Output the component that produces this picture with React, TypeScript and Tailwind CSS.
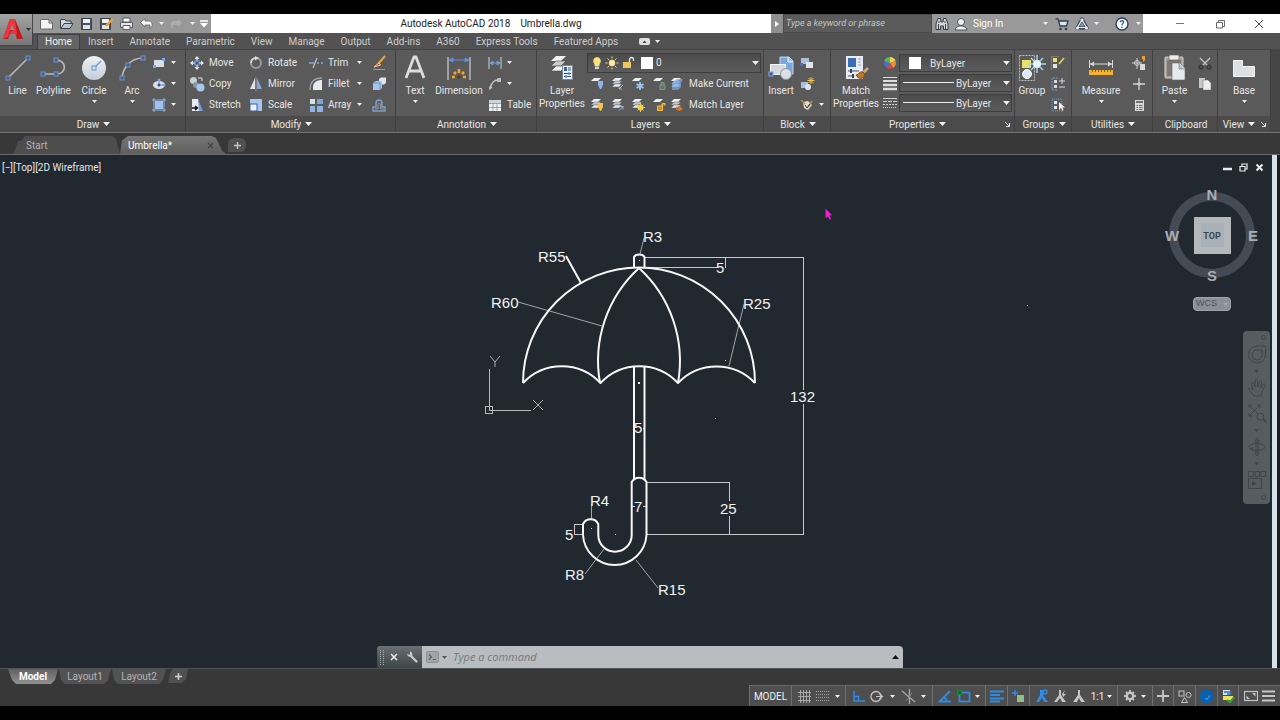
import type { ReactNode } from "react";

interface SvgProps {
  w: number;
  h: number;
  label?: string;
  children: ReactNode;
}

function Svg({ w, h, label, children }: SvgProps) {
  return (
    <svg
      width={w}
      height={h}
      viewBox={`0 0 ${String(w)} ${String(h)}`}
      fill="none"
      className="shrink-0"
      role={label ? "img" : undefined}
      aria-label={label}
      aria-hidden={label ? undefined : true}
    >
      {children}
    </svg>
  );
}

function Caret({ small = false, color = "#f0f0f0" }: { small?: boolean; color?: string }) {
  return small ? (
    <Svg w={5} h={3}>
      <path d="M0 0H5L2.5 3Z" fill={color} />
    </Svg>
  ) : (
    <Svg w={7} h={4}>
      <path d="M0 0H7L3.5 4Z" fill={color} />
    </Svg>
  );
}

/* ---------- large ribbon icons ---------- */

const LineIcon = () => (
  <Svg w={26} h={28}>
    <path d="M3 24L23 4" stroke="#b9b9b9" strokeWidth={1.6} />
    <rect x={1} y={22} width={4} height={4} fill="#4a5f85" stroke="#6d93d0" />
    <rect x={21} y={2} width={4} height={4} fill="#4a5f85" stroke="#6d93d0" />
  </Svg>
);

const PolylineIcon = () => (
  <Svg w={28} h={28}>
    <path d="M3 20H17C27 20 27 6 16 6" stroke="#b9b9b9" strokeWidth={1.6} />
    <rect x={1} y={18} width={4} height={4} fill="#4a5f85" stroke="#6d93d0" />
    <rect x={14} y={18} width={4} height={4} fill="#4a5f85" stroke="#6d93d0" />
    <rect x={14} y={4} width={4} height={4} fill="#4a5f85" stroke="#6d93d0" />
  </Svg>
);

const CircleIcon = () => (
  <Svg w={26} h={28}>
    <defs>
      <linearGradient id="disc" x1="0" y1="0" x2="0" y2="1">
        <stop offset="0" stopColor="#f0f2f4" />
        <stop offset="1" stopColor="#c3ccd6" />
      </linearGradient>
    </defs>
    <circle cx={13} cy={14} r={12} fill="url(#disc)" />
    <path d="M13 14L20 7" stroke="#5f97e0" strokeWidth={1.2} />
    <rect x={11} y={12} width={4} height={4} fill="#cfe0f5" stroke="#5f97e0" />
  </Svg>
);

const ArcIcon = () => (
  <Svg w={28} h={28}>
    <path d="M4 24C5 13 13 4 25 4" stroke="#b9b9b9" strokeWidth={1.6} />
    <rect x={2} y={22} width={4} height={4} fill="#4a5f85" stroke="#6d93d0" />
    <rect x={8} y={9} width={4} height={4} fill="#4a5f85" stroke="#6d93d0" />
    <rect x={23} y={2} width={4} height={4} fill="#4a5f85" stroke="#6d93d0" />
  </Svg>
);

const TextIcon = () => (
  <Svg w={24} h={28}>
    <path
      d="M3 24L11 3H13L21 24M6 17H18"
      stroke="#dcdcdc"
      strokeWidth={2.8}
      strokeLinejoin="round"
    />
  </Svg>
);

const DimensionIcon = () => (
  <Svg w={26} h={28}>
    <path d="M2 3V26M24 3V26" stroke="#a0a0a0" strokeWidth={2} />
    <path d="M3 6H23M3 6l4-2v4zM23 6l-4-2v4z" stroke="#5b8fe0" fill="#5b8fe0" />
    <path
      d="M13 15V19M8 18L10 20M18 18L16 20M6 23H9M17 23H20"
      stroke="#f0a72e"
      strokeWidth={2.6}
    />
    <circle cx={13} cy={23} r={1.5} fill="#5a3b10" />
  </Svg>
);

const LayerPropsIcon = () => (
  <Svg w={26} h={28}>
    <path d="M7 2H17L12 7H2Z" fill="#f2f2f2" />
    <path d="M7 7H17L12 12H2Z" fill="#c9ccd0" stroke="#4a4a4a" strokeWidth={0.6} />
    <path d="M7 12H17L12 17H2Z" fill="#eceff2" stroke="#4a4a4a" strokeWidth={0.6} />
    <rect x={13.5} y={11.5} width={10} height={14} fill="#eef2f8" stroke="#7c8796" />
    <rect x={15} y={13} width={3} height={4} fill="#2f62b0" />
    <path d="M19 14H22M19 16H22M15 19.5H22M15 22.5H22" stroke="#39527a" />
    <rect x={19} y={18.5} width={2} height={2} fill="#3c79d8" />
    <rect x={16} y={21.5} width={2} height={2} fill="#3c79d8" />
  </Svg>
);

const InsertIcon = () => (
  <Svg w={26} h={28}>
    <path d="M12 3H21L25 7V20H12Z" fill="#7ea6de" stroke="#bcd3f2" />
    <path d="M20 3V8H25" stroke="#e6effb" fill="#a9c5ee" />
    <rect x={2.5} y={10.5} width={15} height={10} fill="#d4d9df" stroke="#f4f4f4" />
    <circle cx={18} cy={20} r={5.5} fill="#dbe0e6" stroke="#8c939b" />
    <rect x={1} y={18} width={4} height={4} fill="#4a5f85" stroke="#7ea6e6" />
  </Svg>
);

const MatchPropsIcon = () => (
  <Svg w={26} h={28}>
    <rect x={3} y={2} width={17} height={23} fill="#e9edf2" />
    <rect x={5} y={4} width={8} height={9} fill="#3a6cb0" />
    <path d="M15 5H18M15 8H18M15 11H18" stroke="#8da2bf" />
    <path d="M5 17H16M5 22H11" stroke="#49566a" strokeWidth={1.2} />
    <path d="M8 15V19M10 20V24" stroke="#33445c" strokeWidth={2} />
    <path d="M25 14L20 19" stroke="#cba776" strokeWidth={3} />
    <path d="M13 21C16 21 16 17 20 18L22 21C20 26 15 25 13 21Z" fill="#c2772f" stroke="#7f4817" />
  </Svg>
);

const GroupIcon = () => (
  <Svg w={28} h={28}>
    <rect x={1.5} y={1.5} width={15} height={25} stroke="#bdbdbd" strokeDasharray="2 1" />
    <rect x={4} y={6} width={9} height={8} fill="#e9e26a" />
    <circle cx={9} cy={20} r={4.5} fill="#dcebf6" stroke="#fff" />
    <path d="M19 1V19M10 10H28M13 4L25 16M25 4L13 16" stroke="#a9d5f7" strokeWidth={1.4} />
    <circle cx={19} cy={10} r={4} fill="#e7f5ff" />
  </Svg>
);

const MeasureIcon = () => (
  <Svg w={26} h={28}>
    <path d="M1.5 6V14M24.5 6V14M2 10H24" stroke="#d8d8d8" />
    <path d="M2 10l4-2.5v5zM24 10l-4-2.5v5z" fill="#d8d8d8" />
    <rect x={1} y={16} width={24} height={5} fill="#f2b22e" />
    <path
      d="M4.5 16v2M7.5 16v2M10.5 16v2M13.5 16v2M16.5 16v2M19.5 16v2M22.5 16v2"
      stroke="#8a5d0c"
    />
  </Svg>
);

const PasteIcon = () => (
  <Svg w={26} h={28}>
    <rect x={3} y={3} width={18} height={21} rx={1} fill="#a8a29a" stroke="#d6d1ca" />
    <rect x={5} y={6} width={14} height={16} fill="#7d7871" />
    <rect x={7} y={1} width={10} height={5} rx={1} fill="#ececec" stroke="#555" strokeWidth={0.6} />
    <path d="M10 9H18L23 14V26H10Z" fill="#e6eaef" stroke="#666" strokeWidth={0.6} />
    <path d="M17 9V15H23" fill="#bdc5cf" stroke="#777" strokeWidth={0.6} />
  </Svg>
);

const BaseIcon = () => (
  <Svg w={26} h={28}>
    <path d="M2.5 6.5H11.5V12.5H23.5V22.5H2.5Z" fill="#dfe0e2" stroke="#f4f4f4" />
  </Svg>
);

/* ---------- small ribbon icons ---------- */

const rectangleIcon = (
  <Svg w={16} h={16}>
    <rect x={3} y={5} width={10} height={7} fill="#d9dee4" />
    <rect x={2} y={10} width={3} height={3} fill="#7ea6e6" />
    <rect x={11} y={3} width={3} height={3} fill="#7ea6e6" />
  </Svg>
);
const ellipseIcon = (
  <Svg w={16} h={16}>
    <ellipse cx={8} cy={9} rx={6} ry={4} fill="#d9dee4" />
    <path d="M8 4V9M8 9H12" stroke="#5f97e0" />
    <circle cx={8} cy={9} r={1.5} fill="#31507f" />
    <circle cx={8} cy={4} r={1.5} fill="#7ea6e6" />
    <circle cx={13} cy={9} r={1.5} fill="#7ea6e6" />
  </Svg>
);
const hatchIcon = (
  <Svg w={16} h={16}>
    <rect x={4} y={4} width={8} height={8} fill="#a3c0ea" />
    <path d="M3 1V15M13 1V15M1 3H15M1 13H15" stroke="#8fb2e4" />
  </Svg>
);
const moveIcon = (
  <Svg w={16} h={16}>
    <path d="M8 1l2.5 3h-5zM8 15l2.5-3h-5zM1 8l3-2.5v5zM15 8l-3-2.5v5z" fill="#e3e8ee" />
    <path d="M8 3V13M3 8H13" stroke="#d0d6dd" strokeWidth={1.5} />
    <rect x={6} y={6} width={4} height={4} fill="#3c5a8c" stroke="#7ea6e6" />
  </Svg>
);
const copyIcon = (
  <Svg w={16} h={16}>
    <circle cx={4.5} cy={4.5} r={3.5} fill="#c9ced4" />
    <circle cx={7} cy={9} r={3} fill="#8a96a5" />
    <circle cx={11.5} cy={11.5} r={4} fill="#a9c5ee" />
    <path d="M9 2H13V5" stroke="#e5e5e5" />
  </Svg>
);
const stretchIcon = (
  <Svg w={16} h={16}>
    <path d="M3 2H9L12 14H3Z" fill="#e8ecf1" />
    <path d="M9 2L14 14H10Z" fill="#6f9cdc" />
    <path d="M3 11H8M6 9L8.5 11L6 13" stroke="#111" strokeWidth={1.5} />
  </Svg>
);
const rotateIcon = (
  <Svg w={16} h={16}>
    <circle cx={8} cy={8} r={5} stroke="#9a9a9a" strokeWidth={2} />
    <path d="M3 8A5 5 0 0 1 8 3" stroke="#cfd4da" strokeWidth={2} />
    <path d="M7 1l4 2l-4 2.5z" fill="#d9dee4" />
  </Svg>
);
const mirrorIcon = (
  <Svg w={16} h={16}>
    <path d="M7 2V13H2Z" fill="#dfe3e8" />
    <path d="M9 2V13H14Z" fill="#7fa9e3" />
    <path d="M8 1V15" stroke="#c5c5c5" strokeWidth={0.6} />
  </Svg>
);
const scaleIcon = (
  <Svg w={16} h={16}>
    <rect x={2} y={2} width={12} height={12} fill="#a9c5ee" />
    <rect x={2} y={7} width={7} height={7} fill="#eef1f5" stroke="#3f5f92" />
  </Svg>
);
const trimIcon = (
  <Svg w={16} h={16}>
    <path d="M1 8H6M9 8H11M13 8H15" stroke="#7ea6e6" strokeWidth={1.5} />
    <path d="M5 13L9 3" stroke="#bcbcbc" strokeWidth={1.3} />
  </Svg>
);
const filletIcon = (
  <Svg w={16} h={16}>
    <path d="M5 14V10C6 6 9 4 14 4V14Z" fill="#e7ebef" />
    <path d="M2 14C2 6 6 2 14 2" stroke="#9aa2ab" strokeWidth={1.4} />
  </Svg>
);
const arrayIcon = (
  <Svg w={16} h={16}>
    <rect x={2} y={2} width={5} height={5} fill="#d9dee4" />
    <rect x={9} y={2} width={6} height={5} fill="#7ba3dc" />
    <rect x={2} y={9} width={5} height={6} fill="#8fb2e4" />
    <rect x={9} y={9} width={6} height={6} fill="#8fb2e4" />
  </Svg>
);
const eraseIcon = (
  <Svg w={16} h={16}>
    <path d="M14 1L7 9" stroke="#e8a33a" strokeWidth={2} />
    <path d="M3 12L8 8L9.5 10Z" fill="#c93b26" stroke="#f1d3a2" />
    <path d="M2 14.5H14" stroke="#cfa56b" strokeWidth={0.8} />
  </Svg>
);
const explodeIcon = (
  <Svg w={16} h={16}>
    <path d="M2 7L5 5H11V12L9 14H2Z" fill="#a9c5ee" />
    <path d="M2 7H9V14" stroke="#6d8fc0" />
    <path d="M8 3L10 1.5H15V7L13 8.5H11V5H8Z" fill="#dce7f5" />
  </Svg>
);
const offsetIcon = (
  <Svg w={16} h={16}>
    <path d="M2 14V10H5V6A3 3 0 0 1 11 6V10H14V14Z" stroke="#7ea0cf" strokeWidth={1.4} />
    <path d="M4 12H7V7A1.5 1.5 0 0 1 9.5 7V12H13" stroke="#9c9c9c" />
  </Svg>
);
const linearIcon = (
  <Svg w={16} h={16}>
    <path d="M2 2V14M14 2V14" stroke="#a9a9a9" strokeWidth={1.5} />
    <path d="M3 8H13M3 8l3-2v4zM13 8l-3-2v4z" stroke="#6f9cdc" fill="#6f9cdc" />
  </Svg>
);
const leaderIcon = (
  <Svg w={16} h={16}>
    <path d="M3 13C4 8 6 4 11 4" stroke="#c5c5c5" strokeWidth={1.4} />
    <path d="M2 14l.5-4l3 1.5z" fill="#c5c5c5" />
    <rect x={10} y={2} width={4} height={4} fill="#b5bcc5" />
  </Svg>
);
const tableIcon = (
  <Svg w={16} h={16}>
    <rect x={2} y={3} width={12} height={11} fill="#f0f2f5" />
    <rect x={2} y={3} width={12} height={3} fill="#d0d5db" />
    <path d="M2 6.5H14M2 10.5H14M6 6V14M10 6V14" stroke="#8b929a" strokeWidth={0.8} />
  </Svg>
);

/** A small stack of sheets with a colored marker in the lower right corner. */
function LayerGlyph({ sheets, marker }: { sheets: 1 | 3; marker: ReactNode }) {
  return (
    <Svg w={16} h={16}>
      <path d="M5 2H12L9 5H2Z" fill="#eceff2" />
      {sheets === 3 && (
        <>
          <path d="M5 5H12L9 8H2Z" fill="#bfc5cc" stroke="#555" strokeWidth={0.4} />
          <path d="M5 8H12L9 11H2Z" fill="#e2e6ea" stroke="#555" strokeWidth={0.4} />
        </>
      )}
      {marker}
    </Svg>
  );
}

interface LayerTool {
  name: string;
  icon: ReactNode;
}

const LAYER_TOOLS_TOP: LayerTool[] = [
  {
    name: "Off",
    icon: <LayerGlyph sheets={1} marker={<path d="M9 5H14V9L12 13H11L9 9Z" fill="#8fb4ee" />} />,
  },
  {
    name: "Isolate",
    icon: <LayerGlyph sheets={3} marker={<path d="M13 9L9 13M9 13V10M9 13H12" stroke="#9fb4cf" />} />,
  },
  {
    name: "Freeze",
    icon: (
      <LayerGlyph
        sheets={1}
        marker={
          <path
            d="M10 6V14M6.5 8L13.5 12M13.5 8L6.5 12"
            stroke="#9cc4f4"
            strokeWidth={1.8}
          />
        }
      />
    ),
  },
  {
    name: "Lock",
    icon: (
      <LayerGlyph
        sheets={1}
        marker={<path d="M9 9H14V13.5H9ZM10 9V6.5H13V9" stroke="#7f9a8c" fill="#5d7468" />}
      />
    ),
  },
];

const LAYER_TOOLS_BOTTOM: LayerTool[] = [
  {
    name: "Turn All Layers On",
    icon: <LayerGlyph sheets={3} marker={<path d="M9 6H14V10L12 14H11L9 10Z" fill="#f3c14b" />} />,
  },
  {
    name: "Unisolate",
    icon: (
      <LayerGlyph
        sheets={3}
        marker={<path d="M9 13.5L13 9.5M13 9.5V12.5M13 9.5H10" stroke="#9fb4cf" />}
      />
    ),
  },
  {
    name: "Thaw All Layers",
    icon: (
      <LayerGlyph
        sheets={3}
        marker={
          <>
            <circle cx={10.5} cy={10.5} r={3} fill="#f6cf3f" />
            <path
              d="M10.5 6V15M6 10.5H15M7.5 7.5L13.5 13.5M13.5 7.5L7.5 13.5"
              stroke="#f6cf3f"
            />
          </>
        }
      />
    ),
  },
  {
    name: "Unlock",
    icon: (
      <LayerGlyph
        sheets={1}
        marker={<path d="M6.5 9H11.5V13.5H6.5ZM11 9V6.5H14V8.5" stroke="#f3c14b" fill="#c58e16" />}
      />
    ),
  },
];

const makeCurrentIcon = (
  <LayerGlyph
    sheets={3}
    marker={<path d="M5 6L8 3H14L12 7V11L9 14H3V7Z" fill="#7ea6e6" opacity={0.7} />}
  />
);
const matchLayerIcon = (
  <LayerGlyph sheets={3} marker={<path d="M7 10L11 9L14 12L11 14L7 13Z" fill="#d0742c" />} />
);

const createBlockIcon = (
  <Svg w={16} h={16}>
    <rect x={2} y={3} width={8} height={6} fill="#a9bfe0" />
    <rect x={7} y={7} width={7} height={6} fill="#e2e6ea" />
    <rect x={1} y={8} width={3} height={3} fill="#4a72b5" />
  </Svg>
);
const editBlockIcon = (
  <Svg w={16} h={16}>
    <rect x={2} y={6} width={7} height={6} fill="#a9bfe0" />
    <circle cx={9} cy={11} r={3} fill="#e2e6ea" />
    <path d="M12 1V8M8.5 4.5H15.5M9.5 2L14.5 7M14.5 2L9.5 7" stroke="#f3c14b" />
  </Svg>
);
const attributeIcon = (
  <Svg w={16} h={16}>
    <path d="M4 5L9 4L13 8L9 13L5 11Z" fill="#dcdcdc" />
    <path d="M2 3L6 7M9 10L13 4" stroke="#c98b2d" strokeWidth={1.5} />
    <path d="M6 8L8 11L11 7" stroke="#333" />
  </Svg>
);
const colorWheelIcon = (
  <Svg w={16} h={16}>
    <path d="M8 8V2A6 6 0 0 1 13.5 6Z" fill="#e8d44a" />
    <path d="M8 8L13.5 6A6 6 0 0 1 11 13Z" fill="#e8903a" />
    <path d="M8 8L11 13A6 6 0 0 1 5 13Z" fill="#d64545" />
    <path d="M8 8L5 13A6 6 0 0 1 2.3 6Z" fill="#4c6fd0" />
    <path d="M8 8L2.3 6A6 6 0 0 1 8 2Z" fill="#58b560" />
  </Svg>
);
const lineweightIcon = (
  <Svg w={16} h={16}>
    <path d="M1 2.5H15" stroke="#dcdcdc" />
    <path d="M1 6H15" stroke="#dcdcdc" strokeWidth={2} />
    <path d="M1 10H15M1 14H15" stroke="#dcdcdc" strokeWidth={2.6} />
  </Svg>
);
const linetypeIcon = (
  <Svg w={16} h={16}>
    <path d="M1 3.5H15" stroke="#cfcfcf" />
    <path d="M1 6.5H15" stroke="#cfcfcf" strokeDasharray="4 1" />
    <path d="M1 9.5H15" stroke="#cfcfcf" strokeDasharray="2 1" />
    <path d="M1 12.5H15" stroke="#cfcfcf" strokeDasharray="1 1" />
  </Svg>
);
const ungroupIcon = (
  <Svg w={16} h={16}>
    <rect x={3} y={3} width={4} height={4} fill="#e9e26a" />
    <rect x={3} y={9} width={4} height={4} fill="#e6e6e6" />
    <path d="M1.5 1.5H9M1.5 1.5V15" stroke="#9a9a9a" strokeDasharray="1 1" />
    <path d="M9 9L14 3" stroke="#e4d65a" strokeWidth={1.5} />
  </Svg>
);
const groupEditIcon = (
  <Svg w={16} h={16}>
    <path d="M8 2H2V14H8" stroke="#6f9cdc" strokeDasharray="2 1" />
    <rect x={4} y={4} width={3} height={3} fill="#d9d9d9" />
    <rect x={4} y={9} width={3} height={3} fill="#d9d9d9" />
    <path d="M9 5H15M12 2V8M9 11H15" stroke="#dcdcdc" />
  </Svg>
);
const groupSelectIcon = (
  <Svg w={16} h={16}>
    <rect x={2} y={2} width={10} height={12} stroke="#6f9cdc" strokeDasharray="1 1" />
    <rect x={4} y={4} width={3} height={3} fill="#e6e6e6" />
    <rect x={4} y={9} width={3} height={3} fill="#e6e6e6" />
    <path d="M9 5V13L11 11L12.5 14L13.5 13L12.5 10.5H15Z" fill="#f3f3f3" />
  </Svg>
);
const quickSelectIcon = (
  <Svg w={16} h={16}>
    <path d="M6 3V14M1 8H11" stroke="#cfcfcf" />
    <circle cx={6} cy={8} r={2.5} stroke="#cfcfcf" />
    <rect x={9} y={9} width={5} height={6} fill="#dcdcdc" />
    <path d="M11 1H14V5L12 7V4H11Z" fill="#f0a030" />
  </Svg>
);
const pointIcon = (
  <Svg w={16} h={16}>
    <path d="M8 2V14M2 8H14" stroke="#cfcfcf" strokeWidth={1.3} />
    <path d="M8 6L10 8L8 10L6 8Z" fill="#cfcfcf" />
  </Svg>
);
const calculatorIcon = (
  <Svg w={16} h={16}>
    <rect x={4} y={3} width={9} height={11} fill="#d9d9d9" />
    <rect x={5} y={4} width={7} height={2} fill="#6f6f6f" />
    <path
      d="M5.5 8.5H7M8 8.5H11.5M5.5 10.5H7M8 10.5H11.5M5.5 12.5H7M8 12.5H11.5"
      stroke="#6a6a6a"
    />
  </Svg>
);
const cutIcon = (
  <Svg w={16} h={16}>
    <path d="M3 3L11 11M13 3L5 11" stroke="#c4c4c4" strokeWidth={1.3} />
    <circle cx={4} cy={12} r={1.8} stroke="#383838" strokeWidth={1.6} />
    <circle cx={12} cy={12} r={1.8} stroke="#383838" strokeWidth={1.6} />
  </Svg>
);
const copyClipIcon = (
  <Svg w={16} h={16}>
    <path d="M2 2H8V12H2Z" fill="#c8c8c8" />
    <path d="M6 4H11L14 7V14H6Z" fill="#eeeeee" stroke="#6a6a6a" strokeWidth={0.5} />
  </Svg>
);

/* ---------- ribbon building blocks ---------- */

interface PanelProps {
  title: string;
  className: string;
  caret?: boolean;
  launcher?: boolean;
  children: ReactNode;
}

function Panel({ title, className, caret = true, launcher = false, children }: PanelProps) {
  return (
    <section className={`flex shrink-0 flex-col border-r border-[#404040] ${className}`}>
      <div className="flex h-[66px] bg-[#5a5a5a] pt-0.5">{children}</div>
      <div
        className={`relative flex h-4 items-center justify-center bg-[#4b4b4b] ${launcher ? "pr-2.5" : "pl-0.5"}`}
      >
        <button className="flex items-center gap-1">
          {title}
          {caret && <Caret />}
        </button>
        {launcher && (
          <button aria-label={`${title} settings`} className="absolute right-1">
            <Svg w={5} h={5}>
              <path d="M0 0L4 4M4.5 1V4.5H1" stroke="#e3e3e3" />
            </Svg>
          </button>
        )}
      </div>
    </section>
  );
}

interface BigButtonProps {
  icon: ReactNode;
  label: string;
  second?: string;
  caret?: boolean;
  className: string;
}

function BigButton({ icon, label, second, caret = false, className }: BigButtonProps) {
  return (
    <button className={`flex h-16 shrink-0 flex-col items-center ${className}`}>
      <span className="flex h-8 items-center">{icon}</span>
      <span className="leading-[14px]">{label}</span>
      {second && <span className="leading-[12px]">{second}</span>}
      {caret && (
        <span className="pt-0.5">
          <Caret small />
        </span>
      )}
    </button>
  );
}

interface ToolProps {
  icon: ReactNode;
  name: string;
  showName?: boolean;
  caret?: boolean;
}

function Tool({ icon, name, showName = false, caret = false }: ToolProps) {
  return (
    <button aria-label={name} className="flex h-[21px] items-center gap-[3px]">
      <span className="flex w-[18px] justify-center">{icon}</span>
      {showName && <span>{name}</span>}
      {caret && (
        <span className="ml-auto">
          <Caret small />
        </span>
      )}
    </button>
  );
}

interface ByLayerSelectProps {
  label: string;
  icon: ReactNode;
  preview: "swatch" | "line";
}

function ByLayerSelect({ label, icon, preview }: ByLayerSelectProps) {
  return (
    <div className="flex h-5 items-center gap-px">
      {icon}
      <div className="relative flex-1">
        <select
          aria-label={label}
          className={`h-[18px] w-full appearance-none border border-[#3d3d3d] bg-linear-to-b from-[#4b4b4b] to-[#5c5c5c] ${
            preview === "swatch" ? "pl-[30px]" : "pl-14"
          }`}
        >
          <option>ByLayer</option>
        </select>
        {preview === "swatch" ? (
          <span className="pointer-events-none absolute top-[3px] left-2.5 size-3 bg-white" />
        ) : (
          <span className="pointer-events-none absolute top-2 left-1 h-px w-[51px] bg-[#ececec]" />
        )}
        <span className="pointer-events-none absolute top-[7px] right-0.5">
          <Caret />
        </span>
      </div>
    </div>
  );
}

/* ---------- title bar ---------- */

function QuickAccess() {
  return (
    <div className="flex w-[178px] shrink-0 items-center gap-[5px] bg-[#989898] pl-[6px]">
      <button aria-label="New">
        <Svg w={15} h={15}>
          <path d="M1.5 3.5H10L13.5 7V13H1.5Z" fill="#f3f3f3" stroke="#666" />
          <path d="M10 3.5V7H13.5" stroke="#666" />
        </Svg>
      </button>
      <button aria-label="Open">
        <Svg w={15} h={15}>
          <path d="M1.5 12.5V3.5H6L7 5H12V7" fill="#d5dae0" stroke="#3c4148" />
          <path d="M2 12.5L5 7.5H14L11 12.5Z" fill="#b8c6d8" stroke="#3c4148" />
        </Svg>
      </button>
      <button aria-label="Save">
        <Svg w={15} h={15}>
          <path d="M2.5 2.5H12.5V13.5H2.5Z" fill="#48535f" stroke="#3a424b" />
          <rect x={4} y={3} width={7} height={4} fill="#f0f0f0" />
          <rect x={4} y={9} width={7} height={4} fill="#dfe3e7" />
        </Svg>
      </button>
      <button aria-label="Save As">
        <Svg w={15} h={15}>
          <path d="M1.5 2.5H11.5V13.5H1.5Z" fill="#48535f" stroke="#3a424b" />
          <rect x={3} y={3} width={7} height={4} fill="#f0f0f0" />
          <rect x={3} y={9} width={7} height={4} fill="#dfe3e7" />
          <path d="M13.5 3L7 10" stroke="#eda52f" strokeWidth={2.4} />
        </Svg>
      </button>
      <button aria-label="Plot">
        <Svg w={15} h={15}>
          <path d="M4 2H11V6H4Z" fill="#fff" stroke="#555" />
          <path d="M1.5 6.5H13.5V11.5H1.5Z" fill="#e1e4e8" stroke="#5b5f65" />
          <path d="M4 9.5H11V13.5H4Z" fill="#f8f8f8" stroke="#5b5f65" />
        </Svg>
      </button>
      <button aria-label="Undo" className="flex items-center gap-[5px]">
        <Svg w={15} h={15}>
          <path
            d="M1.5 6.5L6 2.5V5H10C14 5 14 11 11 12.5V9H6V11Z"
            fill="#f5f5f5"
            stroke="#666"
            strokeWidth={0.8}
          />
        </Svg>
        <Caret small />
      </button>
      <button aria-label="Redo" className="flex items-center gap-[7px] pl-px">
        <Svg w={13} h={15}>
          <path d="M12 6.5L8 3V5H4C0 5 0 11 3 12V9H8V11Z" fill="#adadad" />
        </Svg>
        <Caret small />
      </button>
      <button aria-label="Customize Quick Access Toolbar">
        <Svg w={8} h={8}>
          <path d="M0 1H8" stroke="#fff" strokeWidth={1.5} />
          <path d="M0 3H8L4 7.5Z" fill="#fff" />
        </Svg>
      </button>
    </div>
  );
}

function InfoCenter() {
  return (
    <div className="flex shrink-0">
      <button aria-label="Collapse search" className="flex w-3 items-center justify-center bg-[#8f8f8f]">
        <Svg w={4} h={6}>
          <path d="M0 0L4 3L0 6Z" fill="#fff" />
        </Svg>
      </button>
      <input
        aria-label="Search"
        placeholder="Type a keyword or phrase"
        className="w-[149px] border border-[#4a4a4a] bg-[#5b5b5b] px-0.5 text-[9px] italic placeholder:text-[#c4c4c4]"
      />
      <div className="flex w-[211px] items-center bg-[#999999] pl-[3px] text-white">
        <button aria-label="Find" className="w-[15px]">
          <Svg w={14} h={14}>
            <path
              d="M1 12.5V7L3 1.5H5.5L6 5H8L8.5 1.5H11L13 7V12.5H8.5V9H5.5V12.5Z"
              fill="#d8d8d8"
              stroke="#333a44"
            />
            <path d="M3.5 7V12M10.5 7V12M3 5H5M9 5H11" stroke="#333a44" />
          </Svg>
        </button>
        <button className="ml-1 flex items-center gap-[5px]">
          <Svg w={14} h={14}>
            <circle cx={7} cy={5} r={3.5} fill="#f2f2f2" stroke="#4a515b" />
            <path d="M1 13C1 10 4 10 5 9H9C10 10 13 10 13 13Z" fill="#f2f2f2" stroke="#4a515b" />
          </Svg>
          Sign In
        </button>
        <span className="ml-auto flex items-center gap-[6px] pr-0.5">
          <button aria-label="Account">
            <Caret small />
          </button>
          <button aria-label="App Store" className="pl-px">
            <Svg w={14} h={14}>
              <path d="M0.5 2H3L5 9H11.5L13 4H4" fill="#dfe3ea" stroke="#333d55" strokeWidth={1.3} />
              <circle cx={5.5} cy={12} r={1.3} fill="#333d55" />
              <circle cx={11} cy={12} r={1.3} fill="#333d55" />
            </Svg>
          </button>
          <button aria-label="Stay Connected" className="flex items-center gap-[5px]">
            <Svg w={14} h={14}>
              <path d="M7 2L12 11H2Z" stroke="#44506c" strokeWidth={3.4} strokeLinejoin="round" />
              <path d="M7 3L11.5 10.5H2.5Z" stroke="#e9ecf2" strokeWidth={1.2} />
              <circle cx={7} cy={3} r={1.5} fill="#e9ecf2" />
              <circle cx={2.5} cy={11} r={1.5} fill="#e9ecf2" />
              <circle cx={11.5} cy={11} r={1.5} fill="#e9ecf2" />
            </Svg>
            <Caret small />
          </button>
          <button aria-label="Help" className="flex items-center gap-[7px] pl-[10px]">
            <svg width={14} height={14} viewBox="0 0 14 14" className="shrink-0" aria-hidden>
              <circle cx={7} cy={7} r={6} fill="#fff" stroke="#253a63" strokeWidth={1.3} />
              <text x={7} y={10.5} textAnchor="middle" fontSize={10} fontWeight={700} fill="#2c5aa8">
                ?
              </text>
            </svg>
            <Caret small />
          </button>
        </span>
      </div>
    </div>
  );
}

const RIBBON_TABS = [
  "Home",
  "Insert",
  "Annotate",
  "Parametric",
  "View",
  "Manage",
  "Output",
  "Add-ins",
  "A360",
  "Express Tools",
  "Featured Apps",
];

function Header() {
  return (
    <header className="relative bg-[#525252]">
      <div className="flex h-[19px] pl-[33px]">
        <QuickAccess />
        <h1 className="flex flex-1 items-center justify-center gap-2.5 bg-white text-[#222]">
          <span>Autodesk AutoCAD 2018</span>
          <span>Umbrella.dwg</span>
        </h1>
        <InfoCenter />
        <div className="flex w-[137px] items-center justify-between bg-white pr-4 pl-8">
          <button aria-label="Minimize">
            <Svg w={10} h={10}>
              <path d="M1 4.5H9" stroke="#777" />
            </Svg>
          </button>
          <button aria-label="Restore">
            <Svg w={10} h={10}>
              <path
                d="M1.5 3.5H7.5V9H1.5ZM3.5 3V1.5H9.5V7.5H8"
                stroke="#444"
                strokeWidth={0.8}
              />
            </Svg>
          </button>
          <button aria-label="Close">
            <Svg w={10} h={10}>
              <path d="M1 1L9 9M9 1L1 9" stroke="#333" strokeWidth={0.9} />
            </Svg>
          </button>
        </div>
      </div>
      <button
        aria-label="Application menu"
        className="absolute top-0 left-0 flex h-8 w-[33px] items-center gap-0.5 border-r border-b border-[#444] bg-linear-to-b from-[#a4a4a4] to-[#777] pl-0.5"
      >
        <Svg w={22} h={24}>
          <path d="M1 21L8 1H13L21 21H15L13.5 16H8L6 21Z" fill="#c4161c" />
          <path d="M8 1L1 21L6 19L10 7L12 12L9 13L8 16H15L13 1Z" fill="#e8383d" />
          <path d="M10 6L12.5 12H8Z" fill="#8e8e8e" />
        </Svg>
        <Caret small color="#333" />
      </button>
      <nav className="flex h-[17px] items-end border-b border-[#434343] pl-[37px]">
        {RIBBON_TABS.map((tab, index) => (
          <button
            key={tab}
            className={
              index === 0
                ? "h-[15px] border border-b-0 border-[#3f3f3f] bg-[#646464] px-[7px] leading-[14px] text-[#f0f0f0]"
                : "h-[15px] px-2 leading-[15px] text-[#cdcdcd]"
            }
          >
            {tab}
          </button>
        ))}
        <button aria-label="Minimize ribbon" className="ml-[13px] flex h-[15px] items-center gap-[5px]">
          <Svg w={11} h={7}>
            <rect width={11} height={7} rx={2} fill="#e0e0e0" />
            <path d="M3.5 5L5.5 2.5L7.5 5Z" fill="#444" />
          </Svg>
          <Caret small />
        </button>
      </nav>
    </header>
  );
}

/* ---------- ribbon ---------- */

function Ribbon() {
  return (
    <div className="flex border-b border-[#757575] bg-[#464646] text-[#e6e6e6]">
      <Panel title="Draw" className="w-[186px]">
        <BigButton icon={<LineIcon />} label="Line" className="w-[35px]" />
        <BigButton icon={<PolylineIcon />} label="Polyline" className="w-[37px]" />
        <BigButton icon={<CircleIcon />} label="Circle" caret className="w-11" />
        <BigButton icon={<ArcIcon />} label="Arc" caret className="w-8" />
        <div className="flex w-7 flex-col pl-0.5">
          <Tool icon={rectangleIcon} name="Rectangle" caret />
          <Tool icon={ellipseIcon} name="Ellipse" caret />
          <Tool icon={hatchIcon} name="Hatch" caret />
        </div>
      </Panel>

      <Panel title="Modify" className="w-[210px]">
        <div className="ml-0.5 flex w-[59px] flex-col">
          <Tool icon={moveIcon} name="Move" showName />
          <Tool icon={copyIcon} name="Copy" showName />
          <Tool icon={stretchIcon} name="Stretch" showName />
        </div>
        <div className="flex w-[60px] flex-col">
          <Tool icon={rotateIcon} name="Rotate" showName />
          <Tool icon={mirrorIcon} name="Mirror" showName />
          <Tool icon={scaleIcon} name="Scale" showName />
        </div>
        <div className="flex w-[55px] flex-col">
          <Tool icon={trimIcon} name="Trim" showName caret />
          <Tool icon={filletIcon} name="Fillet" showName caret />
          <Tool icon={arrayIcon} name="Array" showName caret />
        </div>
        <div className="ml-2 flex flex-col">
          <Tool icon={eraseIcon} name="Erase" />
          <Tool icon={explodeIcon} name="Explode" />
          <Tool icon={offsetIcon} name="Offset" />
        </div>
      </Panel>

      <Panel title="Annotation" className="w-[141px]">
        <BigButton icon={<TextIcon />} label="Text" caret className="w-[38px]" />
        <BigButton icon={<DimensionIcon />} label="Dimension" className="w-[50px]" />
        <div className="flex flex-col items-start pl-0.5">
          <Tool icon={linearIcon} name="Linear" caret />
          <Tool icon={leaderIcon} name="Leader" caret />
          <Tool icon={tableIcon} name="Table" showName />
        </div>
      </Panel>

      <Panel title="Layers" className="w-[227px]">
        <BigButton icon={<LayerPropsIcon />} label="Layer" second="Properties" className="w-[50px]" />
        <div className="flex flex-1 flex-col pr-0.5">
          <div className="relative flex h-[21px] items-center">
            <select
              aria-label="Layer"
              className="h-5 w-full appearance-none border border-[#3d3d3d] bg-linear-to-b from-[#4b4b4b] to-[#5c5c5c] pl-[68px]"
            >
              <option>0</option>
            </select>
            <span className="pointer-events-none absolute left-1 flex items-center gap-0.5">
              <Svg w={12} h={14}>
                <path d="M6 1A4 4 0 0 1 8.5 8V10H3.5V8A4 4 0 0 1 6 1Z" fill="#fbe27a" />
                <rect x={4} y={10.5} width={4} height={2.5} fill="#d8d8d8" />
              </Svg>
              <Svg w={14} h={14}>
                <circle cx={7} cy={7} r={3.2} fill="#fbe9a0" />
                <path
                  d="M7 0.5V2.5M7 11.5V13.5M0.5 7H2.5M11.5 7H13.5M2.5 2.5L4 4M10 10L11.5 11.5M11.5 2.5L10 4M4 10L2.5 11.5"
                  stroke="#f2dc93"
                />
              </Svg>
              <Svg w={14} h={14}>
                <rect x={2} y={6} width={8} height={6} fill="#f0c65c" />
                <path d="M8.5 6V3.5A2 2 0 0 1 12.5 3.5V5" stroke="#e8e8e8" strokeWidth={1.3} />
              </Svg>
              <span className="ml-1 size-3 bg-white" />
            </span>
            <span className="pointer-events-none absolute right-0.5">
              <Caret />
            </span>
          </div>
          <div className="flex items-center pl-px">
            <span className="flex w-20 justify-between">
              {LAYER_TOOLS_TOP.map((tool) => (
                <Tool key={tool.name} icon={tool.icon} name={tool.name} />
              ))}
            </span>
            <Tool icon={makeCurrentIcon} name="Make Current" showName />
          </div>
          <div className="flex items-center pl-px">
            <span className="flex w-20 justify-between">
              {LAYER_TOOLS_BOTTOM.map((tool) => (
                <Tool key={tool.name} icon={tool.icon} name={tool.name} />
              ))}
            </span>
            <Tool icon={matchLayerIcon} name="Match Layer" showName />
          </div>
        </div>
      </Panel>

      <Panel title="Block" className="w-[67px]">
        <BigButton icon={<InsertIcon />} label="Insert" className="w-[34px]" />
        <div className="flex flex-col items-start">
          <Tool icon={createBlockIcon} name="Create" />
          <Tool icon={editBlockIcon} name="Edit" />
          <Tool icon={attributeIcon} name="Edit Attributes" caret />
        </div>
      </Panel>

      <Panel title="Properties" className="w-[184px]" launcher>
        <BigButton icon={<MatchPropsIcon />} label="Match" second="Properties" className="w-[50px]" />
        <div className="flex flex-1 flex-col pt-px pr-0.5 pl-px">
          <ByLayerSelect label="Object color" icon={colorWheelIcon} preview="swatch" />
          <ByLayerSelect label="Lineweight" icon={lineweightIcon} preview="line" />
          <ByLayerSelect label="Linetype" icon={linetypeIcon} preview="line" />
        </div>
      </Panel>

      <Panel title="Groups" className="w-[57px]">
        <BigButton icon={<GroupIcon />} label="Group" className="w-[34px]" />
        <div className="flex flex-col">
          <Tool icon={ungroupIcon} name="Ungroup" />
          <Tool icon={groupEditIcon} name="Group Edit" />
          <Tool icon={groupSelectIcon} name="Group Selection" />
        </div>
      </Panel>

      <Panel title="Utilities" className="w-[81px]">
        <BigButton icon={<MeasureIcon />} label="Measure" caret className="w-[58px]" />
        <div className="flex flex-col">
          <Tool icon={quickSelectIcon} name="Quick Select" />
          <Tool icon={pointIcon} name="ID Point" />
          <Tool icon={calculatorIcon} name="Quick Calculator" />
        </div>
      </Panel>

      <Panel title="Clipboard" className="w-[65px]" caret={false}>
        <BigButton icon={<PasteIcon />} label="Paste" caret className="w-[43px]" />
        <div className="flex flex-col">
          <Tool icon={cutIcon} name="Cut" />
          <Tool icon={copyClipIcon} name="Copy Clip" />
        </div>
      </Panel>

      <Panel title="View" className="w-[53px]" launcher>
        <BigButton icon={<BaseIcon />} label="Base" caret className="w-[52px]" />
      </Panel>
    </div>
  );
}

function FileTabs() {
  return (
    <div className="flex h-[22px] items-end border-b border-[#6a6a6a] bg-[#383838] pl-3">
      <button className="h-[18px] w-[108px] bg-[#4d4d4d] pl-3.5 text-left text-[#b3b3b3] [clip-path:polygon(0_100%,3px_80%,6px_25%,9px_5px,13px_0,calc(100%-8px)_0,calc(100%-4px)_3px,100%_100%)]">
        Start
      </button>
      <div className="flex h-[18px] w-[106px] items-center justify-between bg-linear-to-b from-[#757575] to-[#5f5f5f] pr-3 pl-2 text-white [clip-path:polygon(0_100%,2px_25%,4px_3px,8px_0,calc(100%-14px)_0,calc(100%-10px)_2px,calc(100%-4px)_80%,100%_100%)]">
        <button>Umbrella*</button>
        <button aria-label="Close Umbrella">
          <Svg w={7} h={7}>
            <path d="M1 1L6 6M6 1L1 6" stroke="#464646" strokeWidth={1.5} />
          </Svg>
        </button>
      </div>
      <button
        aria-label="New drawing"
        className="mb-0.5 ml-0.5 flex h-[14px] w-[18px] items-center justify-center rounded-md rounded-bl-none bg-[#505050]"
      >
        <Svg w={7} h={7}>
          <path d="M3.5 0V7M0 3.5H7" stroke="#c4c4c4" strokeWidth={1.5} />
        </Svg>
      </button>
    </div>
  );
}

/* ---------- drawing ---------- */

interface DrawingLabel {
  text: string;
  x: number;
  y: number;
}

const LABELS: DrawingLabel[] = [
  { text: "R3", x: 643, y: 242 },
  { text: "R55", x: 538, y: 262 },
  { text: "R60", x: 491, y: 308 },
  { text: "R25", x: 743, y: 309 },
  { text: "5", x: 716, y: 273 },
  { text: "132", x: 790, y: 402 },
  { text: "5", x: 634, y: 433 },
  { text: "7", x: 634, y: 512 },
  { text: "25", x: 720, y: 514 },
  { text: "R4", x: 590, y: 506 },
  { text: "5", x: 565, y: 540 },
  { text: "R8", x: 565, y: 580 },
  { text: "R15", x: 658, y: 595 },
];

const POINTS = [
  [639, 260],
  [591, 528],
  [615, 534],
  [725, 360],
  [715, 418],
];

function UmbrellaDrawing() {
  return (
    <svg
      width={380}
      height={381}
      viewBox="446 221 380 381"
      fill="none"
      role="img"
      aria-label="Umbrella drawing"
      className="shrink-0"
    >
      {/* Dimension and leader lines */}
      <g stroke="#c6cace" strokeWidth={1} shapeRendering="crispEdges">
        <path d="M645 257.5H803.5V390M803.5 404V534.5H647" />
        <path d="M645 267.5H717M725.5 257V268" />
        <path d="M647 482.5H729.5V501M729.5 516V534" />
        <path d="M583 524.5H574.5V534.5H583" />
        <path d="M633 428.5H635M643 428.5H645M632 506.5H635M643 506.5H646" />
      </g>
      <g stroke="#aeb3b8" strokeWidth={0.9}>
        <path d="M644 238L640 254M518 302L602 326M744 304L729 366" />
        <path d="M591.5 504V519M585 574L604 549M658 588L636 560" />
      </g>

      {/* Object outlines */}
      <g stroke="#f7f7f7" strokeWidth={2} strokeLinejoin="round">
        <path d="M523 383A116 115.5 0 0 1 755 383" />
        <path d="M523 383A53 53 0 0 1 600.5 383A53 53 0 0 1 678 383A53 53 0 0 1 755 383" />
        <path d="M639 268A126 126 0 0 0 600 383M639 268A126 126 0 0 1 678 383" />
        <path d="M634 268V257A5.5 3.5 0 0 1 644.5 257V268" />
        <path d="M634 366V480M644.5 366V480" />
        <path d="M631.7 482A8.5 8.5 0 0 1 646.5 482V535A31.8 31.8 0 0 1 583 535V524A8.5 8.5 0 0 1 598.3 524V535A16.7 16.7 0 0 0 631.7 535Z" />
        <path d="M566 256L581 283" />
      </g>

      {POINTS.map(([x, y]) => (
        <rect key={`${String(x)}-${String(y)}`} x={x} y={y} width={1} height={1} fill="#d9dcdf" />
      ))}
      <rect x={638} y={382} width={2} height={2} fill="#fff" />

      {/* Coordinate system icon */}
      <g stroke="#b4b8bb" shapeRendering="crispEdges">
        <path d="M489.5 369V410.5H531" />
        <rect x={485.5} y={406.5} width={7} height={7} />
      </g>
      <path
        d="M533 400L543 410M543 400L533 410M490 356L495 362L500 356M495 362V367"
        stroke="#a7abaf"
      />

      <g fill="#f2f2f2" fontSize={15} fontFamily="'Liberation Sans', Arial, sans-serif">
        {LABELS.map((label) => (
          <text key={`${label.text}-${String(label.x)}-${String(label.y)}`} x={label.x} y={label.y}>
            {label.text}
          </text>
        ))}
      </g>
    </svg>
  );
}

function ViewCube() {
  return (
    <div className="absolute top-[30px] right-[10px] flex w-[100px] flex-col items-center gap-3">
      <svg width={100} height={100} viewBox="0 0 100 100" fill="none" role="img" aria-label="View cube">
        <circle cx={50} cy={50} r={38.5} stroke="#434b54" strokeWidth={9} />
        <rect x={32} y={32} width={37} height={37} fill="#b5b8ba" />
        <rect x={39} y={38} width={23} height={24} fill="#a9b0b7" />
        <g textAnchor="middle" fontWeight={700}>
          <text x={50} y={54} fontSize={9} fill="#3d454d">
            TOP
          </text>
          <g fontSize={15} fill="#a9adb1" fontFamily="'Liberation Sans', Arial, sans-serif">
            <text x={50} y={15}>
              N
            </text>
            <text x={50} y={96}>
              S
            </text>
            <text x={10} y={56}>
              W
            </text>
            <text x={91} y={56}>
              E
            </text>
          </g>
        </g>
      </svg>
      <button className="flex h-[14px] w-[38px] items-center justify-between rounded border border-[#a0a4ab] bg-[#8b8f97] px-0.5 font-['Liberation_Sans',Arial,sans-serif] text-[9px] text-[#50565e]">
        WCS
        <Caret small color="#a5a8af" />
      </button>
    </div>
  );
}

function NavBar() {
  return (
    <div className="absolute top-[176px] right-[2px] flex h-[173px] w-[27px] flex-col items-center justify-between rounded bg-[#555d61] py-1">
      <span className="ml-auto pr-1">
        <Svg w={5} h={5}>
          <circle cx={2.5} cy={2.5} r={2} stroke="#3f464a" />
        </Svg>
      </span>
      <button aria-label="Steering wheel">
        <Svg w={20} h={20}>
          <path d="M10 1H18.5V10A8.5 8.5 0 1 1 10 1Z" stroke="#3f464a" />
          <path d="M10 5H15V10A5 5 0 1 1 10 5Z" stroke="#3f464a" />
        </Svg>
      </button>
      <Caret small color="#3f464a" />
      <button aria-label="Pan">
        <Svg w={20} h={20}>
          <path
            d="M6 17C5 14 2 13 1.5 10.5C3 9.5 4.5 11 6 12L4.5 5C5.5 4 6.5 4.5 7 6L8 9V2.5C9 1.5 10 1.5 10.5 2.5L11 9L12.5 3C13.5 2 14.5 3 14.5 4L14 10L16.5 6C17.5 5.5 18.5 6 18 7.5L15 14L14 18H7Z"
            stroke="#3f464a"
          />
        </Svg>
      </button>
      <button aria-label="Zoom extents">
        <Svg w={20} h={20}>
          <path d="M2 2L13 13M13 2L2 13M2 5V2H5M10 2H13V5M2 10V13H5" stroke="#3f464a" />
          <circle cx={13.5} cy={13.5} r={3.5} fill="#555d61" stroke="#3f464a" />
          <path d="M16 16L19 19" stroke="#3f464a" strokeWidth={2} />
        </Svg>
      </button>
      <Caret small color="#3f464a" />
      <button aria-label="Orbit">
        <Svg w={20} h={20}>
          <path d="M10 1L12 4H8ZM10 19L8 16H12ZM9 4V16M11 4V16" stroke="#3f464a" />
          <ellipse cx={10} cy={10} rx={8} ry={3.5} stroke="#3f464a" />
          <path d="M3 12L6 10V14Z" fill="#3f464a" />
        </Svg>
      </button>
      <Caret small color="#3f464a" />
      <button aria-label="Show motion">
        <Svg w={20} h={20}>
          <path
            d="M1.5 1.5H6.5V6.5H1.5ZM8 1.5H12.5V6.5H8ZM14 1.5H18.5V6.5H14ZM1.5 8.5H14.5V18.5H1.5Z"
            stroke="#3f464a"
          />
          <path d="M5 11L10 13.5L5 16Z" fill="#3f464a" />
        </Svg>
      </button>
      <span className="ml-auto pr-1">
        <Svg w={5} h={5}>
          <circle cx={2.5} cy={2.5} r={2} stroke="#3f464a" />
        </Svg>
      </span>
    </div>
  );
}

function CommandLine() {
  return (
    <div className="absolute bottom-0 left-[377px] flex h-[22px] w-[526px] items-center rounded-t-sm bg-[#babdbf]">
      <div className="flex h-full w-[45px] shrink-0 items-center gap-1.5 rounded-tl-sm bg-linear-to-b from-[#6a6f72] to-[#3f4447] pl-[3px]">
        <Svg w={4} h={15}>
          <path d="M0.5 0V15M3.5 0V15" stroke="#a9adaf" strokeDasharray="1 1" />
        </Svg>
        <button aria-label="Close command line">
          <Svg w={8} h={8}>
            <path d="M1 1L7 7M7 1L1 7" stroke="#eee" strokeWidth={1.5} />
          </Svg>
        </button>
        <button aria-label="Customize" className="pl-0.5">
          <Svg w={12} h={12}>
            <path d="M5 5L10.5 10.5" stroke="#c9cccd" strokeWidth={2.2} strokeLinecap="round" />
            <path d="M1 3A3 3 0 0 0 6 5A3 3 0 0 0 4 0.5V3.5H2.5Z" fill="#c9cccd" />
          </Svg>
        </button>
      </div>
      <button aria-label="Recent commands" className="flex items-center gap-[3px] pl-1">
        <Svg w={13} h={12}>
          <rect x={0.5} y={0.5} width={12} height={11} rx={1} fill="#a0a4a8" stroke="#8b9094" />
          <path d="M3 3.5L5.5 6L3 8.5M7 8.5H10" stroke="#5a6065" strokeWidth={1.2} />
        </Svg>
        <Caret small color="#555" />
      </button>
      <input
        aria-label="Command"
        placeholder="Type a command"
        className="ml-1 min-w-0 flex-1 bg-transparent pl-0.5 font-['Open_Sans',sans-serif] text-[11px] text-[#333] italic placeholder:text-[#74787b]"
      />
      <button aria-label="Command history" className="pr-1">
        <Svg w={7} h={4}>
          <path d="M0 4H7L3.5 0Z" fill="#111" />
        </Svg>
      </button>
    </div>
  );
}

function Viewport() {
  return (
    <main className="flex flex-1 bg-[#212830]">
      <div className="relative flex flex-1 items-center justify-center">
        <button className="absolute top-[5px] left-0.5 text-[#e3e5e7]">[−][Top][2D Wireframe]</button>
        <UmbrellaDrawing />

        <div className="absolute top-2 right-2 flex items-center gap-[7px]">
          <button aria-label="Minimize viewport">
            <Svg w={9} h={9}>
              <path d="M0 6H9" stroke="#e8ecf0" strokeWidth={2.5} />
            </Svg>
          </button>
          <button aria-label="Restore viewport">
            <Svg w={9} h={9}>
              <path d="M1 3.5H6V8H1ZM3 3V1H8V6H6.5" stroke="#e8ecf0" strokeWidth={1.2} />
            </Svg>
          </button>
          <button aria-label="Close viewport">
            <Svg w={9} h={9}>
              <path d="M1.5 1.5L7.5 7.5M7.5 1.5L1.5 7.5" stroke="#e8ecf0" strokeWidth={2} />
            </Svg>
          </button>
        </div>

        <ViewCube />
        <NavBar />
        <span className="absolute top-[150px] right-[244px] size-px bg-[#c0c4c8]" />
        <span className="absolute top-[53px] left-[825px]">
          <Svg w={8} h={13} label="Pointer">
            <path d="M0.5 0.5L7 7L4.5 7.5L6 11L4.5 11.5L3 8.5L0.5 10Z" fill="#f01fd0" />
          </Svg>
        </span>
        <CommandLine />
      </div>
      <div className="w-[5px] shrink-0 bg-[#d6e0ea]" />
      <div className="w-[3px] shrink-0 bg-[#1a1e22]" />
    </main>
  );
}

/* ---------- status bar ---------- */

const BLUE = "#2f8be6";
const GRAY = "#c4c4c4";

interface StatusGroup {
  id: string;
  className: string;
  content: ReactNode;
}

const STATUS_GROUPS: StatusGroup[] = [
  { id: "Model space", className: "w-[42px]", content: "MODEL" },
  {
    id: "Grid and snap",
    className: "w-[54px]",
    content: (
      <>
        <Svg w={13} h={13}>
          <path
            d="M2.5 0V13M5.5 0V13M8.5 0V13M11.5 0V13M0 2.5H13M0 6.5H13M0 10.5H13"
            stroke="#b0b0b0"
            strokeWidth={0.9}
          />
        </Svg>
        <Svg w={13} h={13}>
          <path
            d="M0 1.5H13M0 4.5H13M0 7.5H13M0 10.5H13"
            stroke="#a5a5a5"
            strokeDasharray="1 1"
          />
        </Svg>
        <Caret small />
      </>
    ),
  },
  {
    id: "Ortho and polar tracking",
    className: "w-[87px]",
    content: (
      <>
        <Svg w={13} h={13}>
          <path d="M2 1V11H13M2 6.5H6.5V11" stroke={BLUE} strokeWidth={1.5} />
        </Svg>
        <Svg w={14} h={13}>
          <circle cx={6} cy={6.5} r={5} stroke={GRAY} strokeWidth={1.3} />
          <path d="M6 6.5H13M9.5 4L12.5 6.5L9.5 9" stroke={GRAY} strokeWidth={1.2} />
        </Svg>
        <Caret small />
        <Svg w={15} h={15}>
          <path d="M1 2L14 13M8.5 0V15" stroke="#a5a5a5" strokeWidth={1.3} />
          <path d="M5 12L11 4" stroke="#8a8a8a" strokeWidth={0.8} />
        </Svg>
        <Caret small />
      </>
    ),
  },
  {
    id: "Object snap",
    className: "w-[53px]",
    content: (
      <>
        <Svg w={14} h={13}>
          <path d="M13 11.5H1.5L12 1M6 7L9 10" stroke={BLUE} strokeWidth={1.8} />
        </Svg>
        <Svg w={14} h={13}>
          <rect x={2.5} y={2.5} width={10} height={9} stroke={BLUE} strokeWidth={1.8} />
          <rect x={0.5} y={0.5} width={4} height={4} fill="#0f6f23" stroke="#128a2a" />
        </Svg>
        <Caret small />
      </>
    ),
  },
  {
    id: "Lineweight display",
    className: "w-[22px]",
    content: (
      <Svg w={14} h={13}>
        <path d="M0 1.5H14M0 5H10" stroke={BLUE} strokeWidth={2} />
        <path d="M0 8.5H14M0 11.5H10" stroke={BLUE} strokeWidth={2} />
      </Svg>
    ),
  },
  {
    id: "Selection cycling",
    className: "w-[22px]",
    content: (
      <Svg w={13} h={13}>
        <rect x={5} y={5} width={7} height={7} fill="#8fbf86" />
        <path d="M0 3H6M3 0V6" stroke={BLUE} strokeWidth={1.5} />
      </Svg>
    ),
  },
  {
    id: "Annotation scale",
    className: "w-[88px]",
    content: (
      <>
        <Svg w={14} h={14}>
          <path d="M5 1H8V6L13 13H9L7 9L4 13H1L5 6Z" fill={BLUE} />
          <circle cx={10} cy={3} r={2} stroke={BLUE} strokeWidth={1.3} />
        </Svg>
        <Svg w={14} h={14}>
          <path d="M6 1H8V6L13 13H9L7 9L4 13H1L6 6Z" fill={GRAY} />
          <path d="M9 5L12 1L10.5 5H13L10 8" fill={GRAY} />
        </Svg>
        <Svg w={14} h={14}>
          <path d="M6 1H8V6L13 13H9L7 9L5 13H1L6 6Z" fill={GRAY} />
        </Svg>
        <span className="flex items-center gap-[3px]">
          1:1
          <Caret small />
        </span>
      </>
    ),
  },
  {
    id: "Workspace",
    className: "w-[35px]",
    content: (
      <>
        <Svg w={12} h={12}>
          <circle cx={6} cy={6} r={3.2} stroke={GRAY} strokeWidth={2.4} />
          <path
            d="M6 0V2M6 10V12M0 6H2M10 6H12M2 2L3.5 3.5M8.5 8.5L10 10M10 2L8.5 3.5M3.5 8.5L2 10"
            stroke={GRAY}
            strokeWidth={1.8}
          />
        </Svg>
        <Caret small />
      </>
    ),
  },
  {
    id: "Annotation monitor",
    className: "w-[21px]",
    content: (
      <Svg w={12} h={12}>
        <path d="M6 0V12M0 6H12" stroke={GRAY} strokeWidth={1.8} />
      </Svg>
    ),
  },
  {
    id: "Isolate objects",
    className: "w-[22px]",
    content: (
      <Svg w={14} h={13}>
        <rect x={1} y={1} width={5} height={5} stroke={GRAY} />
        <circle cx={10.5} cy={5} r={2.5} stroke={GRAY} />
        <path d="M6.5 7.5L9.5 12.5H3.5Z" stroke={GRAY} />
      </Svg>
    ),
  },
  {
    id: "Hardware acceleration",
    className: "w-[22px]",
    content: (
      <Svg w={15} h={15}>
        <circle cx={7.5} cy={7.5} r={7} fill="#0b5fb0" />
        <path d="M6 9L8 10.5L11 6.5" stroke="#3c96ea" strokeWidth={1.2} />
      </Svg>
    ),
  },
  {
    id: "Units",
    className: "w-[21px]",
    content: (
      <Svg w={13} h={13}>
        <rect x={1} y={0} width={7} height={5} fill="#cfe4f7" />
        <path d="M2 2H9V4H5" stroke="#2f6fc0" strokeWidth={1.3} />
        <rect x={1} y={6} width={10} height={4} fill="#f1e14c" />
        <path d="M5 10L8 12L12 7" stroke="#35a83c" strokeWidth={2} />
      </Svg>
    ),
  },
  {
    id: "Clean screen and customization",
    className: "w-[42px]",
    content: (
      <>
        <Svg w={14} h={12}>
          <rect x={0.5} y={1.5} width={13} height={9} stroke={GRAY} strokeWidth={1.2} />
          <path d="M8 3H11.5V6.5ZM6 9H2.5V5.5Z" fill={GRAY} />
        </Svg>
        <Svg w={13} h={12}>
          <path d="M0 1.5H13M0 6H13M0 10.5H13" stroke={GRAY} strokeWidth={1.8} />
        </Svg>
      </>
    ),
  },
];

function Footer() {
  return (
    <footer className="flex h-[38px] items-start justify-between border-t border-[#4b5357] bg-[#383838]">
      <div className="flex pl-2 text-[#b5b5b5]">
        <button className="h-[15px] w-[50px] bg-linear-to-b from-[#606060] to-[#929292] leading-[14px] font-bold text-white [clip-path:polygon(0_0,100%_0,calc(100%-3px)_11px,calc(100%-7px)_100%,8px_100%,4px_11px)]">
          Model
        </button>
        <button className="ml-px h-[15px] w-[52px] bg-[#525252] leading-[14px] [clip-path:polygon(0_0,100%_0,calc(100%-3px)_11px,calc(100%-7px)_100%,6px_100%,2px_11px)]">
          Layout1
        </button>
        <button className="ml-px h-[15px] w-[54px] bg-[#525252] leading-[14px] [clip-path:polygon(0_0,100%_0,calc(100%-3px)_11px,calc(100%-7px)_100%,6px_100%,2px_11px)]">
          Layout2
        </button>
        <button
          aria-label="New layout"
          className="ml-0.5 flex h-[14px] w-5 items-center justify-center bg-[#505050] [clip-path:polygon(5px_0,100%_0,calc(100%-2px)_10px,calc(100%-6px)_100%,0_100%,2px_4px)]"
        >
          <Svg w={7} h={7}>
            <path d="M3.5 0V7M0 3.5H7" stroke="#d0d0d0" strokeWidth={1.5} />
          </Svg>
        </button>
      </div>
      <div className="flex h-full pt-4 text-[#f0f0f0]">
        {STATUS_GROUPS.map((group) => (
          <button
            key={group.id}
            aria-label={group.id}
            className={`flex items-center justify-evenly border-t border-l border-t-[#6a6a6a] border-l-[#707070] bg-[#4e4e4e] ${group.className}`}
          >
            {group.content}
          </button>
        ))}
      </div>
    </footer>
  );
}

export default function App() {
  return (
    <div className="flex min-h-screen min-w-[1280px] flex-col border-y-[14px] border-black bg-black font-[Roboto,'Open_Sans',sans-serif] text-[10px]">
      <Header />
      <Ribbon />
      <FileTabs />
      <Viewport />
      <Footer />
    </div>
  );
}
